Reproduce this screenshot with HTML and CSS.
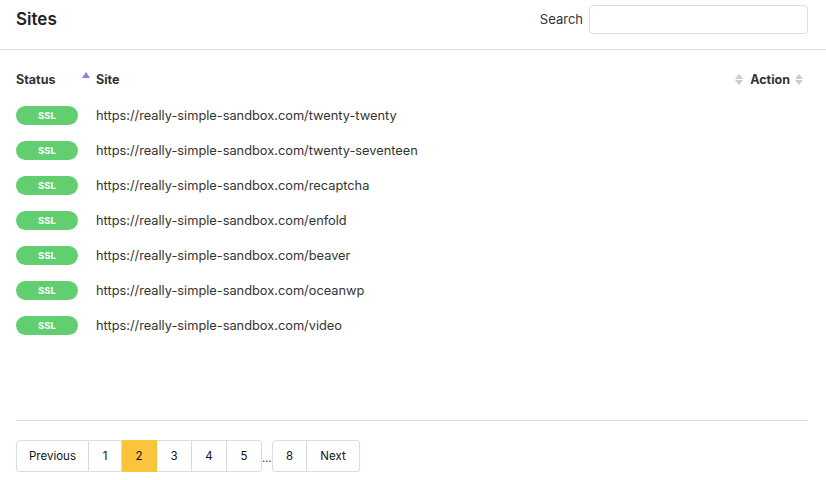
FILE: index.html
```html
<!DOCTYPE html>
<html lang="en">
<head>
  <meta charset="UTF-8" />
  <meta name="viewport" content="width=device-width, initial-scale=1.0">
  <title>Sites</title>
  <link rel="stylesheet" href="styles.css">
</head>
<body>

  <div class="header">
    <h2>Sites</h2>
    <label class="search">Search <input type="text" /></label>
  </div>

  <div class="table">
    <div class="row head">
      <div class="col-status">Status</div>
      <div class="col-site"><span class="sort-up"></span>Site</div>
      <div class="col-action"><span class="sort-both"></span><span class="action-label">Action</span><span class="sort-both"></span></div>
    </div>

    <div class="row"><div class="col-status"><span class="badge">SSL</span></div><div class="col-site">https://really-simple-sandbox.com/twenty-twenty</div></div>
    <div class="row"><div class="col-status"><span class="badge">SSL</span></div><div class="col-site">https://really-simple-sandbox.com/twenty-seventeen</div></div>
    <div class="row"><div class="col-status"><span class="badge">SSL</span></div><div class="col-site">https://really-simple-sandbox.com/recaptcha</div></div>
    <div class="row"><div class="col-status"><span class="badge">SSL</span></div><div class="col-site">https://really-simple-sandbox.com/enfold</div></div>
    <div class="row"><div class="col-status"><span class="badge">SSL</span></div><div class="col-site">https://really-simple-sandbox.com/beaver</div></div>
    <div class="row"><div class="col-status"><span class="badge">SSL</span></div><div class="col-site">https://really-simple-sandbox.com/oceanwp</div></div>
    <div class="row"><div class="col-status"><span class="badge">SSL</span></div><div class="col-site">https://really-simple-sandbox.com/video</div></div>
  </div>

  <div class="footer">
    <div class="pagination">
      <button class="first prev">Previous</button>
      <button class="one">1</button>
      <button class="active">2</button>
      <button>3</button>
      <button>4</button>
      <button class="last">5</button>
      <span class="dots">...</span>
      <button class="first">8</button>
      <button class="last next">Next</button>
    </div>
  </div>

</body>
</html>
```

FILE: styles.css
```css
body {
  margin: 0;
  font-family: Inter, "Liberation Sans", sans-serif;
  color: #333;
  background: #fff;
}

.header {
  display: flex;
  align-items: center;
  justify-content: space-between;
  height: 38px;
  padding: 0 18px 11px 16px;
  border-bottom: 1px solid #dedede;
}

.header h2 {
  margin: 0;
  font-size: 17px;
  font-weight: 600;
  color: #222;
}

.search {
  display: flex;
  align-items: center;
  gap: 6px;
  font-size: 13px;
  color: #333;
}

.search input {
  width: 219px;
  height: 29px;
  box-sizing: border-box;
  border: 1px solid #ddd;
  border-radius: 4px;
  outline: none;
}

.table {
  height: 370px;
  padding: 16px 18px 0 16px;
  box-sizing: border-box;
}

.row {
  display: flex;
  align-items: center;
  height: 35px;
  font-size: 12.8px;
}

.row.head {
  height: 26px;
  margin-bottom: 6px;
  font-weight: 700;
  font-size: 12.5px;
  color: #333;
}

.col-status {
  width: 80px;
}

.col-site {
  flex: 1;
  display: flex;
  align-items: center;
}

.col-action {
  display: flex;
  align-items: center;
  margin-right: 5px;
}

.action-label {
  margin: 0 5px 0 7px;
}

.sort-up {
  width: 0;
  height: 0;
  border-left: 4px solid transparent;
  border-right: 4px solid transparent;
  border-bottom: 6px solid #7b86e0;
  margin: -8px 6px 0 -14px;
}

.sort-both {
  display: inline-flex;
  flex-direction: column;
  gap: 1px;
}

.sort-both::before,
.sort-both::after {
  content: "";
  width: 0;
  height: 0;
  border-left: 4px solid transparent;
  border-right: 4px solid transparent;
}

.sort-both::before {
  border-bottom: 5px solid #ccc;
}

.sort-both::after {
  border-top: 5px solid #ccc;
}

.badge {
  display: inline-block;
  width: 62px;
  height: 19px;
  line-height: 19px;
  border-radius: 10px;
  background: #61ce70;
  color: #fff;
  font-size: 9.5px;
  font-weight: 700;
  text-align: center;
}

.footer {
  margin: 0 18px 0 16px;
  border-top: 1px solid #dedede;
  padding-top: 19px;
}

.pagination {
  display: flex;
  align-items: stretch;
}

.pagination button {
  height: 32px;
  width: 35px;
  padding: 0;
  border: 1px solid #ddd;
  border-left: none;
  background: #fff;
  font-family: inherit;
  font-size: 11.5px;
  color: #111;
  box-shadow: 0 1px 2px rgba(0,0,0,0.06);
}

.pagination button.prev {
  width: 73px;
}

.pagination button.one {
  width: 33px;
}

.pagination button.next {
  width: 53px;
}

.pagination button.first {
  border-left: 1px solid #ddd;
  border-radius: 4px 0 0 4px;
}

.pagination button.last {
  border-radius: 0 4px 4px 0;
}

.pagination button.active {
  background: #fbc43d;
  border-color: #fbc43d;
}

.dots {
  width: 10px;
  font-size: 11px;
  display: flex;
  align-items: flex-end;
  padding-bottom: 7px;
  box-sizing: border-box;
  color: #333;
}
```
